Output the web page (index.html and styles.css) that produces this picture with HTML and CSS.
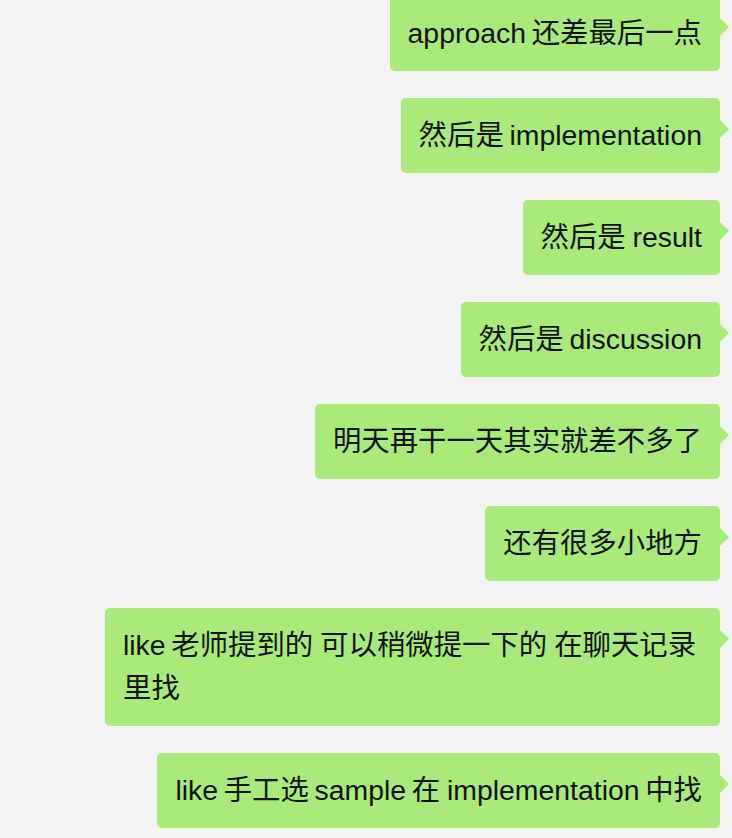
FILE: index.html
```html
<!DOCTYPE html>
<html lang="zh-CN">
<head>
<meta charset="utf-8">
<title>Chat</title>
<link rel="stylesheet" href="styles.css">
</head>
<body>
<div class="chat">
  <div class="msg"><div class="bubble">approach&#8201;还差最后一点</div></div>
  <div class="msg"><div class="bubble">然后是&#8201;implementation</div></div>
  <div class="msg"><div class="bubble">然后是 result</div></div>
  <div class="msg"><div class="bubble">然后是&#8201;discussion</div></div>
  <div class="msg"><div class="bubble">明天再干一天其实就差不多了</div></div>
  <div class="msg"><div class="bubble">还有很多小地方</div></div>
  <div class="msg"><div class="bubble">like&#8201;老师提到的 可以稍微提一下的 在聊天记录里找</div></div>
  <div class="msg"><div class="bubble">like&#8201;手工选&#8201;sample&#8201;在 implementation&#8201;中找</div></div>
</div>
</body>
</html>
```

FILE: styles.css
```css
html, body {
  margin: 0;
  padding: 0;
  background: #f3f3f3;
}

body {
  font-family: "Liberation Sans", "Noto Sans CJK SC", sans-serif;
  color: #141414;
  overflow: hidden;
}

.chat {
  display: flex;
  flex-direction: column;
  align-items: flex-end;
  gap: 27px;
  margin-top: -4px;
  padding-right: 12px;
}

.msg {
  display: flex;
  justify-content: flex-end;
}

.bubble {
  position: relative;
  background: #a9ea7a;
  border-radius: 5px;
  padding: 16px 18px;
  font-size: 28.4px;
  line-height: 43px;
  word-spacing: -1px;
  max-width: 579px;
}

.bubble::after {
  content: "";
  position: absolute;
  right: -9px;
  top: 22px;
  border-style: solid;
  border-width: 9px 0 9px 9px;
  border-color: transparent transparent transparent #a9ea7a;
}
```
